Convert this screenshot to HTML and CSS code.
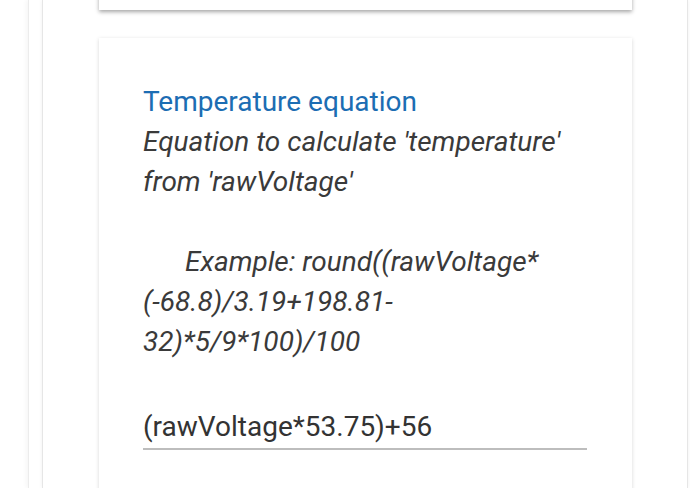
FILE: index.html
```html
<!DOCTYPE html>
<html lang="en">
<head>
  <meta charset="UTF-8">
  <title>Temperature equation</title>
  <link rel="stylesheet" href="styles.css">
</head>
<body>
  <div class="outer">
    <div class="panel">
      <div class="card card-top"></div>

      <div class="card">
        <h3 class="field-title">Temperature equation</h3>
        <p class="field-desc">Equation to calculate 'temperature' from 'rawVoltage'</p>
        <p class="field-desc example">Example: round((rawVoltage*(-68.8)/3.19+198.81-32)*5/9*100)/100</p>
        <input class="field-input" type="text" value="(rawVoltage*53.75)+56">
      </div>
    </div>
  </div>
</body>
</html>
```

FILE: styles.css
```css
body {
  font-family: Roboto, 'Noto Sans', sans-serif;
  background: #ffffff;
  margin: 0;
  padding: 0;
  overflow: hidden;
  height: 488px;
}

.outer {
  margin-left: 28px;
  height: 100%;
  border-left: 1px solid #ececec;
  box-shadow: -2px 0 4px rgba(0,0,0,0.04);
}

.panel {
  margin-left: 13px;
  margin-right: 2px;
  height: 100%;
  border-left: 1px solid #e6e6e6;
  border-right: 1px solid #e6e6e6;
  box-shadow: 0 0 4px rgba(0,0,0,0.06);
  display: flex;
  flex-direction: column;
  gap: 28px;
}

.card {
  margin: 0 55px 0 56px;
  background: white;
  box-shadow: 0 1px 4px rgba(0,0,0,0.16);
  padding: 44px 45px 60px 44px;
}

.card-top {
  height: 0;
  padding: 0;
  margin-top: -10px;
  padding-top: 20px;
  box-shadow: 0 2px 4px rgba(0,0,0,0.35);
}

.field-title {
  margin: 0;
  color: #1c6db3;
  font-size: 28px;
  font-weight: normal;
  line-height: 40px;
}

.field-desc {
  margin: 0;
  color: #3a3a3a;
  font-size: 28px;
  font-style: italic;
  line-height: 40px;
}

.example {
  margin-top: 40px;
  text-indent: 42px;
}

.field-input {
  display: block;
  width: 100%;
  box-sizing: border-box;
  margin-top: 48px;
  padding: 0 0 5px;
  border: none;
  border-bottom: 2px solid #bdbdbd;
  font-family: Roboto, sans-serif;
  font-size: 28px;
  color: #333;
  outline: none;
  background: transparent;
}
```
